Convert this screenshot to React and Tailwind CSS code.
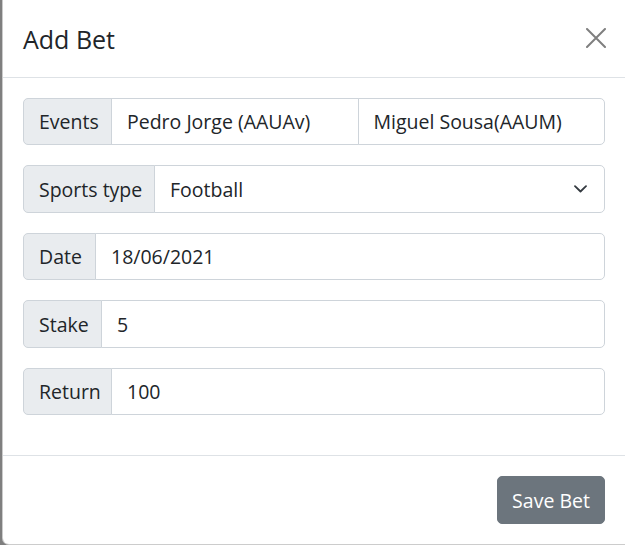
import React from "react";

const rowBox = "flex h-[47.5px] w-full text-[19.5px] leading-[30px] text-[#212529]";
const labelBox = "flex items-center px-[15px] pt-[2px] bg-[#e9ecef] border border-[#ced4da] rounded-l-[5px] whitespace-nowrap";
const cellBox = "flex items-center px-[15px] pt-[2px] bg-white border border-[#ced4da] -ml-px";

const Field = ({ label, labelWidth, value }) => (
    <div className={rowBox}>
        <div className={labelBox + " " + labelWidth}>{label}</div>
        <div className={cellBox + " flex-1 rounded-r-[5px]"}>{value}</div>
    </div>
);

const App = () => {
    return (
        <div className="w-[625px] h-[545px] overflow-hidden bg-[#7f7f7f] pl-[2px] font-['Open_Sans',sans-serif]">
            <div className="w-[640px] bg-white border-l border-b border-black/20 rounded-bl-[7px]">
                <div className="flex items-center justify-between h-[77.5px] pl-5 pr-[19px] border-b border-[#dee2e6] w-[622px]">
                    <h5 className="text-[25px] leading-[37.5px] pt-[3px] font-medium text-[#212529]">Add Bet</h5>
                    <button className="w-5 h-5 flex items-center justify-center">
                        <svg width="20" height="20" viewBox="0 0 20 20">
                            <path d="M1 1L19 19M19 1L1 19" stroke="#7f7f7f" strokeWidth="2" strokeLinecap="round" />
                        </svg>
                    </button>
                </div>

                <div className="p-5 w-[622px] flex flex-col gap-5 pb-10">
                    <div className={rowBox}>
                        <div className={labelBox + " w-[89px]"}>Events</div>
                        <div className={cellBox + " flex-1"}>Pedro Jorge (AAUAv)</div>
                        <div className={cellBox + " flex-1 rounded-r-[5px]"}>Miguel Sousa(AAUM)</div>
                    </div>

                    <div className={rowBox}>
                        <div className={labelBox + " w-[132px]"}>Sports type</div>
                        <div className={cellBox + " flex-1 rounded-r-[5px] justify-between pr-[17px]"}>
                            <span>Football</span>
                            <svg width="13" height="8" viewBox="0 0 13 8" className="-mt-[2px]">
                                <path d="M1 1.2l5.5 5.3L12 1.2" fill="none" stroke="#343a40" strokeWidth="1.8" strokeLinecap="round" strokeLinejoin="round" />
                            </svg>
                        </div>
                    </div>

                    <Field label="Date" labelWidth="w-[73px]" value="18/06/2021" />
                    <Field label="Stake" labelWidth="w-[79px]" value="5" />
                    <Field label="Return" labelWidth="w-[89px]" value="100" />
                </div>

                <div className="flex justify-end w-[622px] p-[15px] border-t border-[#dee2e6]">
                    <button className="m-[5px] h-[47.5px] w-[108px] pt-[2px] rounded-[5px] bg-[#6c757d] border border-[#6c757d] text-white text-[19.5px] leading-[30px]">
                        Save Bet
                    </button>
                </div>
            </div>
        </div>
    );
};

export default App;
